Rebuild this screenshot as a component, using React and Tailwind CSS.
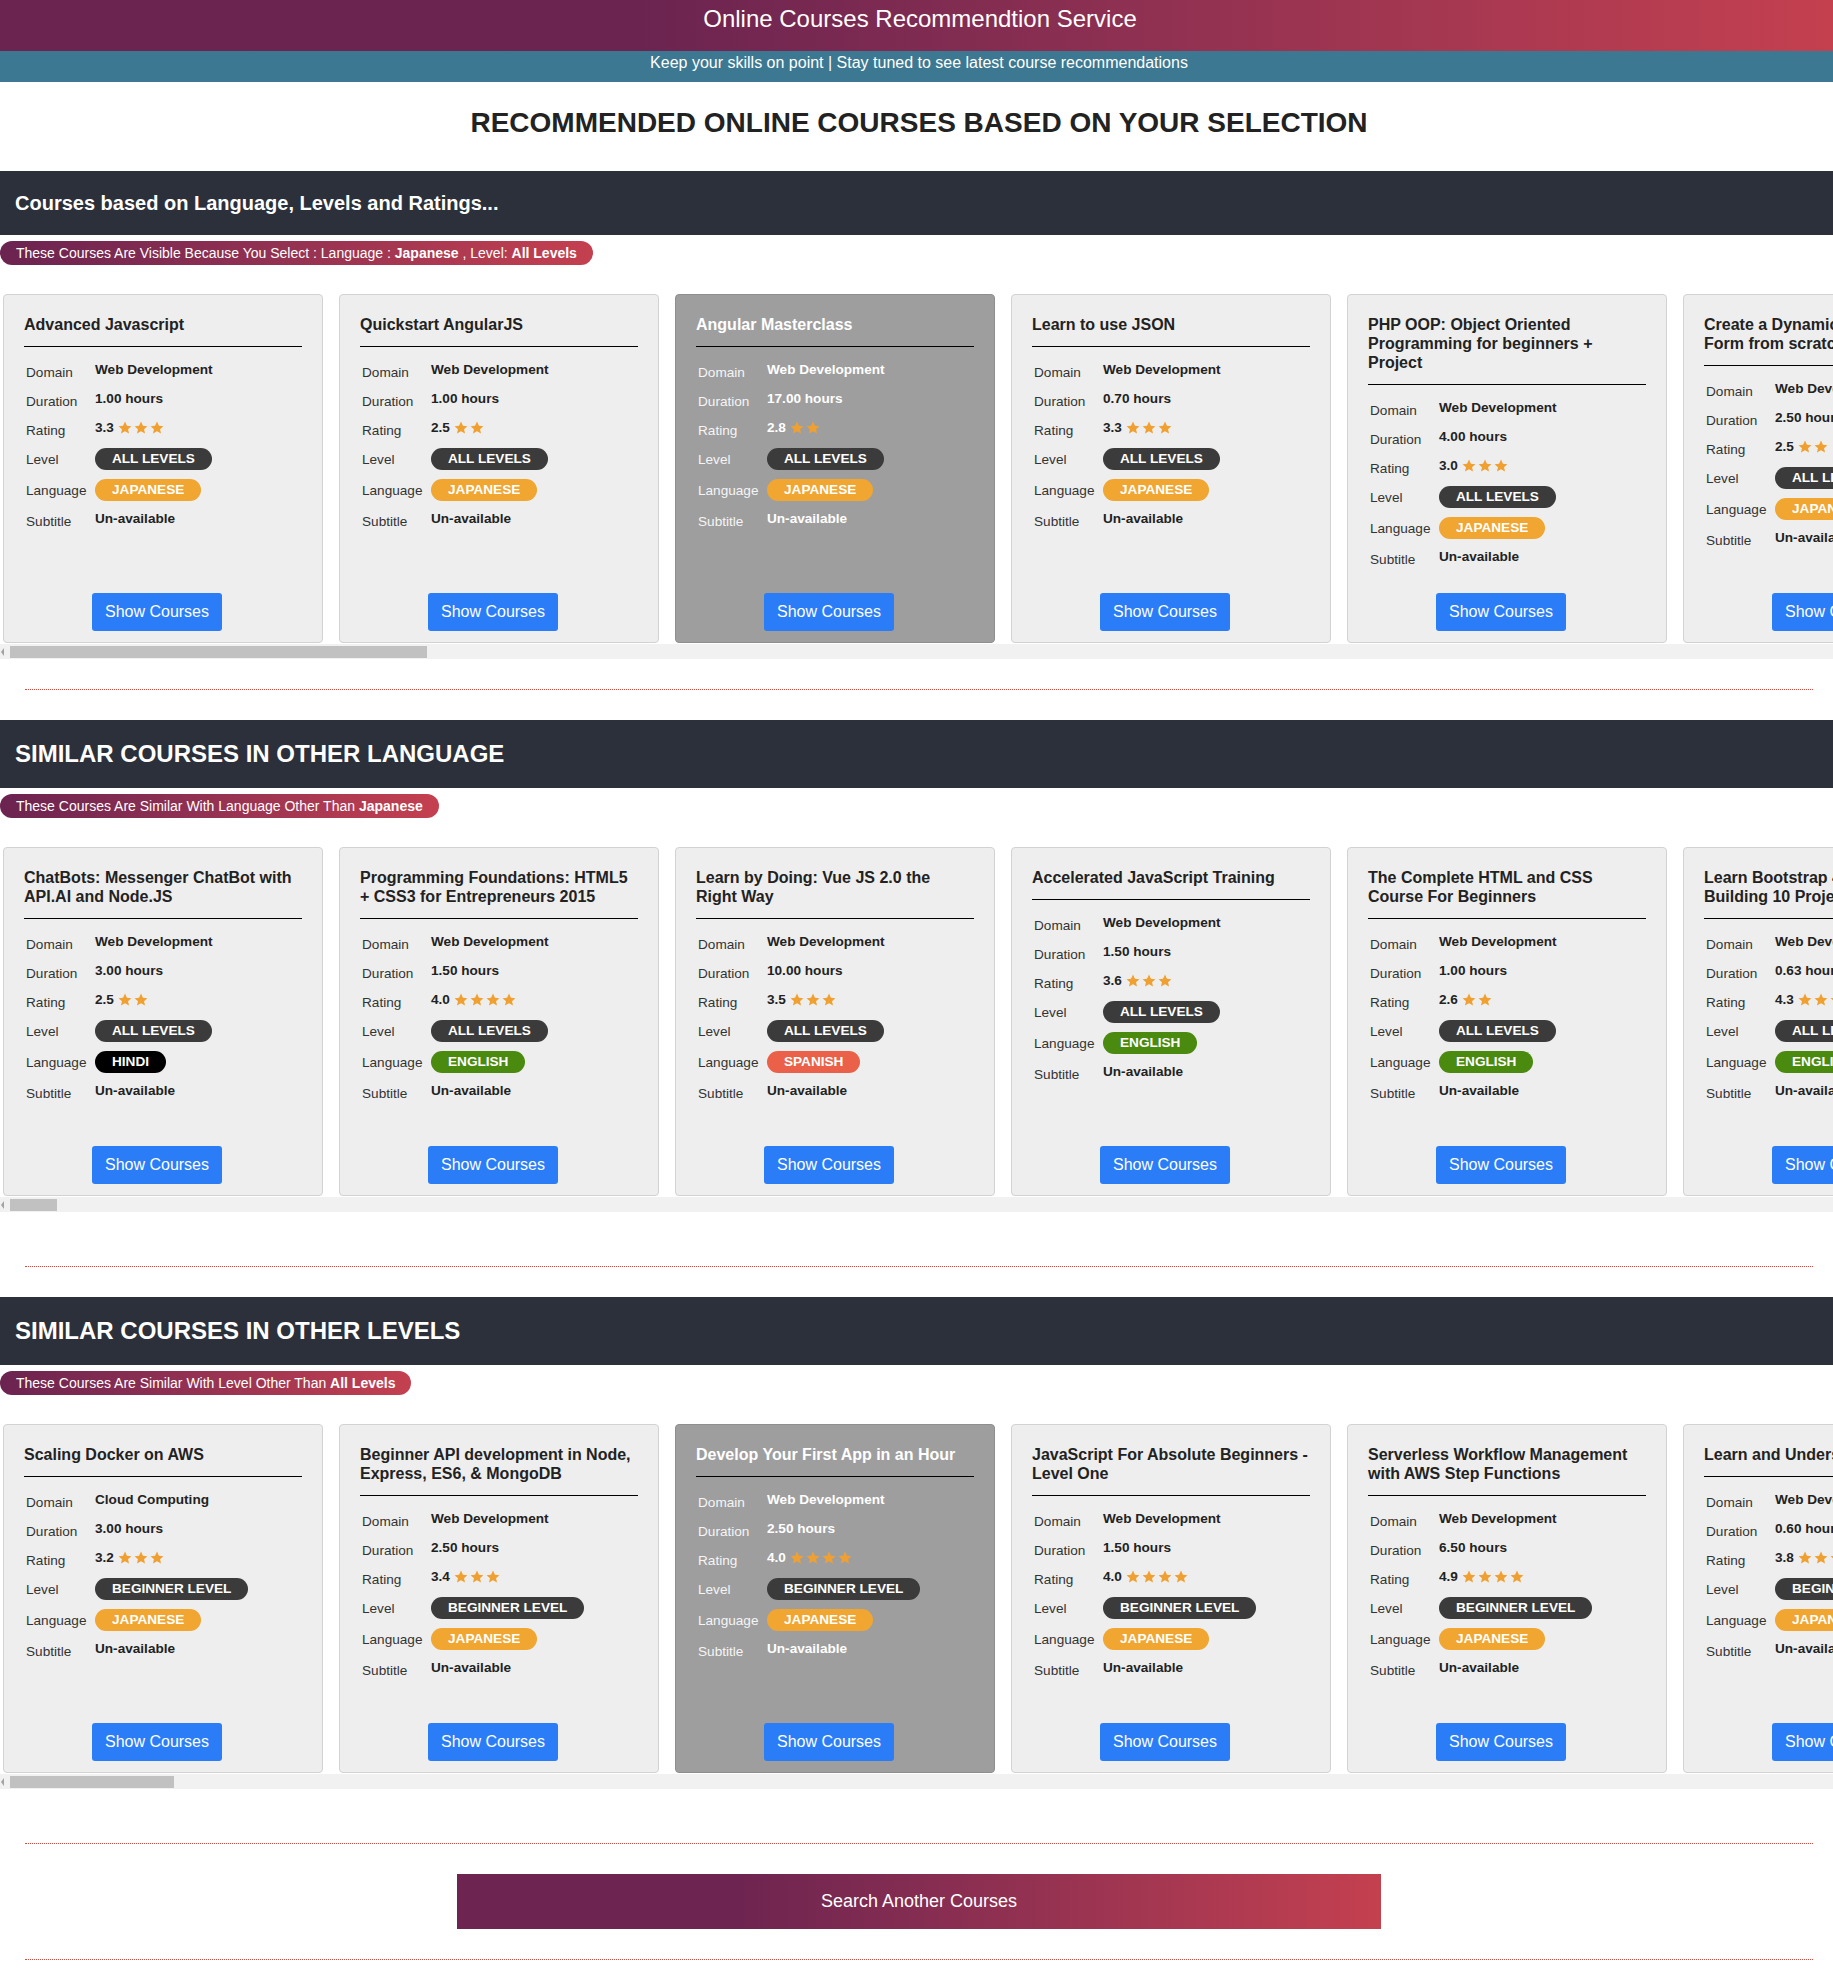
import React from 'react';

const LANG_COLORS = {
  JAPANESE: 'bg-[#f0a630]',
  HINDI: 'bg-black',
  ENGLISH: 'bg-[#4a8a0e]',
  SPANISH: 'bg-[#ea6048]',
};

const WEB = 'Web Development';

const sectionOne = [
  { title: 'Advanced Javascript', domain: WEB, duration: '1.00', rating: 3.3, language: 'JAPANESE' },
  { title: 'Quickstart AngularJS', domain: WEB, duration: '1.00', rating: 2.5, language: 'JAPANESE' },
  { title: 'Angular Masterclass', domain: WEB, duration: '17.00', rating: 2.8, language: 'JAPANESE' },
  { title: 'Learn to use JSON', domain: WEB, duration: '0.70', rating: 3.3, language: 'JAPANESE' },
  { title: 'PHP OOP: Object Oriented Programming for beginners + Project', domain: WEB, duration: '4.00', rating: 3.0, language: 'JAPANESE' },
  { title: 'Create a Dynamic Registration\nForm from scratch', domain: WEB, duration: '2.50', rating: 2.5, language: 'JAPANESE' },
];

const sectionTwo = [
  { title: 'ChatBots: Messenger ChatBot with API.AI and Node.JS', domain: WEB, duration: '3.00', rating: 2.5, language: 'HINDI' },
  { title: 'Programming Foundations: HTML5 + CSS3 for Entrepreneurs 2015', domain: WEB, duration: '1.50', rating: 4.0, language: 'ENGLISH' },
  { title: 'Learn by Doing: Vue JS 2.0 the Right Way', domain: WEB, duration: '10.00', rating: 3.5, language: 'SPANISH' },
  { title: 'Accelerated JavaScript Training', domain: WEB, duration: '1.50', rating: 3.6, language: 'ENGLISH' },
  { title: 'The Complete HTML and CSS Course For Beginners', domain: WEB, duration: '1.00', rating: 2.6, language: 'ENGLISH' },
  { title: 'Learn Bootstrap 4 by\nBuilding 10 Projects', domain: WEB, duration: '0.63', rating: 4.3, language: 'ENGLISH' },
];

const sectionThree = [
  { title: 'Scaling Docker on AWS', domain: 'Cloud Computing', duration: '3.00', rating: 3.2, language: 'JAPANESE' },
  { title: 'Beginner API development in Node, Express, ES6, & MongoDB', domain: WEB, duration: '2.50', rating: 3.4, language: 'JAPANESE' },
  { title: 'Develop Your First App in an Hour', domain: WEB, duration: '2.50', rating: 4.0, language: 'JAPANESE' },
  { title: 'JavaScript For Absolute Beginners - Level One', domain: WEB, duration: '1.50', rating: 4.0, language: 'JAPANESE' },
  { title: 'Serverless Workflow Management with AWS Step Functions', domain: WEB, duration: '6.50', rating: 4.9, language: 'JAPANESE' },
  { title: 'Learn and Understand AngularJS', domain: WEB, duration: '0.60', rating: 3.8, language: 'JAPANESE' },
];

const Star = () => (
  <svg width="14" height="14" viewBox="0 0 24 24" className="fill-[#f0a030]">
    <path d="M12 1l3.3 7 7.7.8-5.8 5.2 1.7 7.6L12 17.7l-6.9 3.9 1.7-7.6L1 8.8l7.7-.8z" />
  </svg>
);

const Badge = ({ color, children }) => (
  <span className={`inline-block rounded-full px-[17px] text-[13.6px] font-bold leading-[22px] text-white ${color}`}>
    {children}
  </span>
);

const Row = ({ label, badge, light, children }) => (
  <div className={`flex pl-[2px] ${badge ? 'h-[31px]' : 'h-[29px]'}`}>
    <span className={`mt-[6px] w-[69px] flex-none text-[13.6px] leading-[20px] ${light ? 'text-[#f5f5f5]' : 'text-[#333]'}`}>
      {label}
    </span>
    <div
      className={
        badge ? 'mt-[2px]' : `mt-[3px] text-[13.6px] font-bold leading-[20px] ${light ? 'text-white' : 'text-[#222]'}`
      }
    >
      {children}
    </div>
  </div>
);

const CourseCard = ({ course, level, hovered }) => (
  <div
    className={`flex h-[349px] w-[320px] flex-none flex-col rounded border px-5 pt-5 pb-[11px] ${
      hovered ? 'border-[#8e8e8e] bg-[#9e9e9e]' : 'border-[#d2d2d2] bg-[#eeeeee]'
    }`}
  >
    <h3 className={`whitespace-pre-line text-[16px] font-bold leading-[19px] ${hovered ? 'text-white' : 'text-[#222]'}`}>
      {course.title}
    </h3>
    <hr className="mt-3 border-black" />
    <div className="mt-[10px]">
      <Row label="Domain" light={hovered}>{course.domain}</Row>
      <Row label="Duration" light={hovered}>{course.duration} hours</Row>
      <Row label="Rating" light={hovered}>
        <span className="flex items-center">
          {course.rating.toFixed(1)}
          <span className="ml-1 flex gap-[2px]">
            {Array.from({ length: Math.floor(course.rating) }, (_, i) => (
              <Star key={i} />
            ))}
          </span>
        </span>
      </Row>
      <Row label="Level" badge light={hovered}>
        <Badge color="bg-[#3b3b3b]">{level}</Badge>
      </Row>
      <Row label="Language" badge light={hovered}>
        <Badge color={LANG_COLORS[course.language]}>{course.language}</Badge>
      </Row>
      <Row label="Subtitle" light={hovered}>Un-available</Row>
    </div>
    <div className="mt-auto flex justify-center pr-3">
      <button className="rounded-[3px] bg-[#2a7df7] px-[13px] py-[10px] text-[16px] leading-[18px] text-white">
        Show Courses
      </button>
    </div>
  </div>
);

// horizontal scroller track under each card row
const ScrollTrack = ({ thumb }) => (
  <div className="flex h-[15px] items-center bg-[#f1f1f1]">
    <span className="ml-px h-0 w-0 border-y-[4px] border-r-[3px] border-y-transparent border-r-[#a3a3a3]" />
    <span className={`ml-[6px] h-[12px] bg-[#c1c1c1] ${thumb}`} />
  </div>
);

const Section = ({ heading, big, note, courses, level, hoverIndex, thumb }) => (
  <section>
    <h2
      className={`bg-[#2b303b] px-[15px] py-5 font-bold text-white ${
        big ? 'text-[24px] leading-[28px]' : 'text-[20px] leading-[24px]'
      }`}
    >
      {heading}
    </h2>
    <div className="mt-[6px]">
      <span className="inline-block rounded-full bg-linear-to-r from-[#6b2350] to-[#c4404f] px-4 text-[14px] leading-[24px] text-white">
        {note}
      </span>
    </div>
    <div className="mt-[29px] flex gap-4 overflow-hidden pb-px pl-[3px]">
      {courses.map((course, index) => (
        <CourseCard key={index} course={course} level={level} hovered={index === hoverIndex} />
      ))}
    </div>
    <ScrollTrack thumb={thumb} />
  </section>
);

const Divider = ({ className }) => <hr className={`ml-[25px] mr-[20px] border-dotted border-[#e0443a] ${className}`} />;

export default function App() {
  return (
    <div className="min-h-screen bg-white pb-[26px] font-['Liberation_Sans',Arial,sans-serif]">
      <header>
        <div className="h-[51px] bg-linear-to-r from-[#6b2450] from-35% to-[#c4404f] pt-[5px] pl-[7px] text-center text-[24px] leading-[28px] text-white">
          Online Courses Recommendtion Service
        </div>
        <div className="h-[31px] bg-[#3c7891] pt-[3px] pl-[5px] text-center text-[16px] leading-[18px] text-white">
          Keep your skills on point | Stay tuned to see latest course recommendations
        </div>
      </header>

      <h1 className="pt-[25px] pb-[32px] pl-[5px] text-center text-[28px] font-bold leading-[32px] text-[#222]">
        RECOMMENDED ONLINE COURSES BASED ON YOUR SELECTION
      </h1>

      <Section
        heading="Courses based on Language, Levels and Ratings..."
        note={
          <>
            These Courses Are Visible Because You Select : Language : <b>Japanese</b> , Level: <b>All Levels</b>
          </>
        }
        courses={sectionOne}
        level="ALL LEVELS"
        hoverIndex={2}
        thumb="w-[417px]"
      />

      <Divider className="mt-[30px]" />

      <div className="mt-[30px]">
        <Section
          big
          heading="SIMILAR COURSES IN OTHER LANGUAGE"
          note={
            <>
              These Courses Are Similar With Language Other Than <b>Japanese</b>
            </>
          }
          courses={sectionTwo}
          level="ALL LEVELS"
          hoverIndex={-1}
          thumb="w-[47px]"
        />
      </div>

      <Divider className="mt-[54px]" />

      <div className="mt-[30px]">
        <Section
          big
          heading="SIMILAR COURSES IN OTHER LEVELS"
          note={
            <>
              These Courses Are Similar With Level Other Than <b>All Levels</b>
            </>
          }
          courses={sectionThree}
          level="BEGINNER LEVEL"
          hoverIndex={2}
          thumb="w-[164px]"
        />
      </div>

      <Divider className="mt-[54px]" />

      <div className="mt-[30px] flex justify-center pl-[5px]">
        <button className="h-[55px] w-[924px] bg-linear-to-r from-[#6d2450] from-30% to-[#c4404f] text-[18px] text-white">
          Search Another Courses
        </button>
      </div>

      <Divider className="mt-[30px]" />
    </div>
  );
}
